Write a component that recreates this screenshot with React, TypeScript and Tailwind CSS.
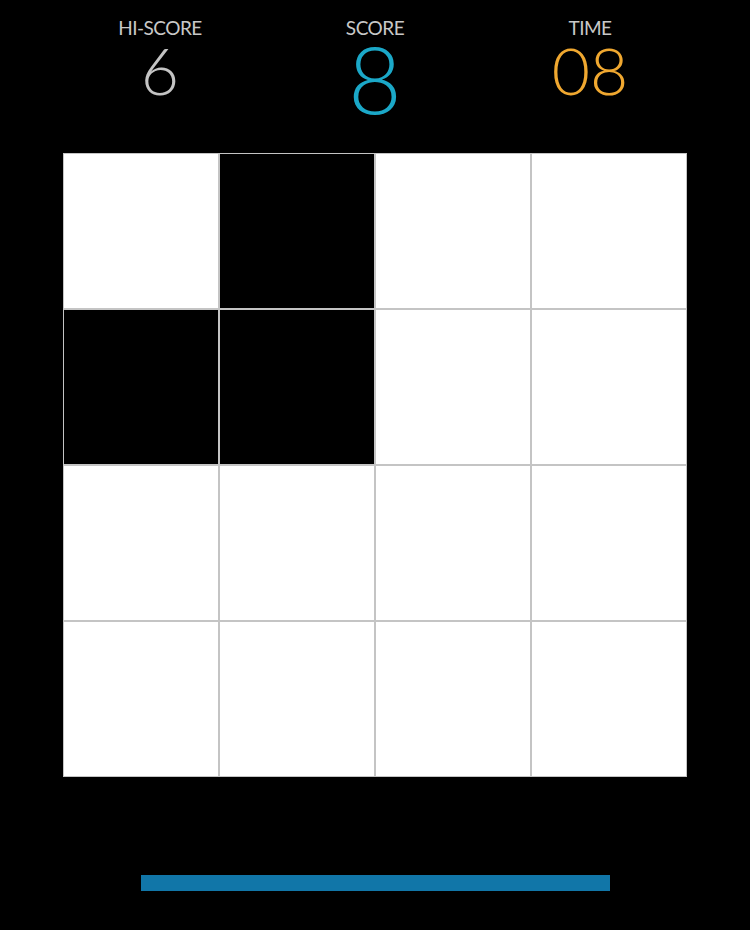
const board = [
  [false, true, false, false],
  [true, true, false, false],
  [false, false, false, false],
  [false, false, false, false],
];

function Stat({ label, value, color, big }: { label: string; value: string; color: string; big?: boolean }) {
  return (
    <div className="w-[215px] flex flex-col items-center">
      <div className="text-[19px] leading-[19px] text-[#c8c8c8] tracking-[-0.5px] mt-[18px]">{label}</div>
      <div
        className={
          big
            ? `text-[92px] leading-[70px] font-light mt-[7px] ${color}`
            : `text-[66px] leading-[52px] font-light mt-[7px] ${color}`
        }
      >
        {value}
      </div>
    </div>
  );
}

export default function App() {
  return (
    <div className="w-[750px] h-[930px] bg-black flex flex-col items-center" style={{ fontFamily: 'Lato, "Noto Sans", sans-serif' }}>
      <div className="flex h-[153px] items-start">
        <Stat label="HI-SCORE" value="6" color="text-[#c4c4c4]" />
        <Stat label="SCORE" value="8" color="text-[#1ba8c8]" big />
        <Stat label="TIME" value="08" color="text-[#f0a830]" />
      </div>
      <div className="grid grid-cols-4">
        {board.flat().map((dark, i) => (
          <div
            key={i}
            className={`w-[156px] h-[156px] border border-[#c4c4c4] ${dark ? 'bg-black' : 'bg-white'}`}
          />
        ))}
      </div>
      <div className="mt-[98px] w-[469px] h-[16px] bg-[#1176a8] ml-[1px]" />
    </div>
  );
}
